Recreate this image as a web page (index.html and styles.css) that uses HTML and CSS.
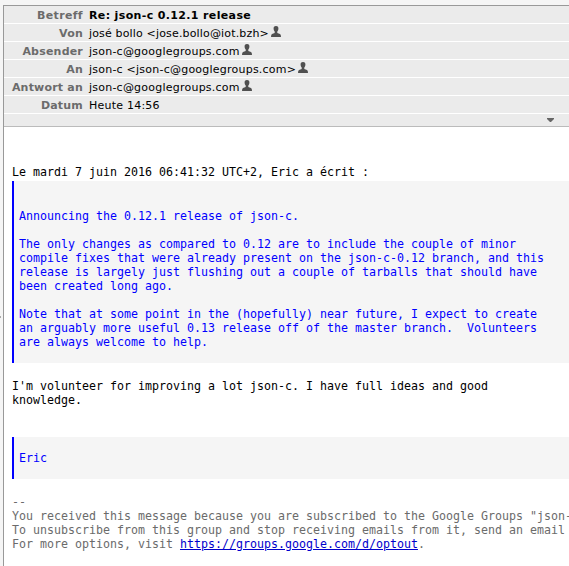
FILE: index.html
```html
<!DOCTYPE html>
<html lang="de">
<head>
<meta charset="utf-8">
<title>Re: json-c 0.12.1 release</title>
<link rel="stylesheet" href="styles.css">
</head>
<body>
<svg width="0" height="0" class="defs"><symbol id="person" viewBox="0 0 10 11"><path d="M5 0C6.8 0 7.6 1.2 7.4 2.8C7.3 4.2 6.8 5 6.3 5.5V7L9 8Q10 8.5 10 11H0Q0 8.5 1 8L3.7 7V5.5C3.2 5 2.7 4.2 2.6 2.8C2.4 1.2 3.2 0 5 0Z"/></symbol></svg>
<i class="grip"></i>
<main class="pane">
<header class="headers">
<div class="row"><span class="label betreff">Betreff</span><b class="subject">Re: json-c 0.12.1 release</b></div>
<div class="row"><span class="label">Von</span><span class="value von">josé bollo &lt;jose.bollo@iot.bzh&gt;</span><svg class="person"><use href="#person"/></svg></div>
<div class="row"><span class="label">Absender</span><span class="value">json-c@googlegroups.com</span><svg class="person"><use href="#person"/></svg></div>
<div class="row"><span class="label">An</span><span class="value">json-c &lt;json-c@googlegroups.com&gt;</span><svg class="person"><use href="#person"/></svg></div>
<div class="row"><span class="label">Antwort an</span><span class="value">json-c@googlegroups.com</span><svg class="person"><use href="#person"/></svg></div>
<div class="row"><span class="label">Datum</span><span class="value">Heute 14:56</span></div>
<div class="toggle"><svg width="7" height="4" viewBox="0 0 7 4"><path d="M0 0H7V1L4 4H3L0 1Z"/></svg></div>
</header>
<article class="message">
<p>Le mardi 7 juin 2016 06:41:32 UTC+2, Eric a écrit :</p>
<blockquote class="announcement">Announcing the 0.12.1 release of json-c.

The only changes as compared to 0.12 are to include the couple of minor
compile fixes that were already present on the json-c-0.12 branch, and this
release is largely just flushing out a couple of tarballs that should have
been created long ago.

Note that at some point in the (hopefully) near future, I expect to create
an arguably more useful 0.13 release off of the master branch.  Volunteers
are always welcome to help.</blockquote>
<p class="reply">I'm volunteer for improving a lot json-c. I have full ideas and good
knowledge.</p>
<blockquote class="signed">Eric</blockquote>
<footer class="signature">--
You received this message because you are subscribed to the Google Groups "json-
To unsubscribe from this group and stop receiving emails from it, send an email
For more options, visit <a href="#">https://groups.google.com/d/optout</a>.</footer>
</article>
</main>
</body>
</html>
```
FILE: styles.css
```css
* { box-sizing: border-box; }
body { margin: 0; height: 566px; overflow: hidden; background: #f5f5f5; padding: 5px 0 0 3px; }
.defs { position: absolute; }
.grip { position: absolute; left: 0; top: 316px; width: 1px; height: 2px; background: #aaa; }
.pane { height: 561px; background: #fff; border-left: 1px solid #999; border-top: 1px solid #999; overflow: hidden; }
.headers { font: 11px/17px "DejaVu Sans", sans-serif; color: #000; background: #ebebeb; border-bottom: 1px solid #bbb; }
.row { display: flex; height: 18px; border-bottom: 1px solid #fff; white-space: nowrap; padding-top: 1px; }
.label { width: 79px; margin-right: 6px; text-align: right; font-weight: bold; color: #6b6b6b; letter-spacing: 0.2px; }
.betreff { letter-spacing: 0.35px; }
.subject { letter-spacing: 0.36px; }
.value { letter-spacing: 0.23px; }
.von { letter-spacing: 0.16px; }
.person { width: 10px; height: 11px; margin: 1px 0 0 2px; fill: #505050; }
.toggle { height: 12px; display: flex; justify-content: flex-end; padding: 4px 15px 0 0; }
.toggle svg { fill: #666; }
.message { padding: 38px 0 0 8px; font: 11.63px/14px "DejaVu Sans Mono", monospace; white-space: pre; color: #000; display: flex; flex-direction: column; }
.message p, blockquote { margin: 0; }
blockquote { background: #f5f5f5; border-left: 2px solid #00f; color: #00f; }
.announcement { margin-top: 2px; padding: 28px 0 14px 5px; }
.message .reply { margin-top: 16px; }
.signed { margin-top: 30px; padding: 14px 0 14px 5px; }
.signature { margin-top: 16px; color: #6b6b6b; }
.signature a { color: #0000cc; }
```
